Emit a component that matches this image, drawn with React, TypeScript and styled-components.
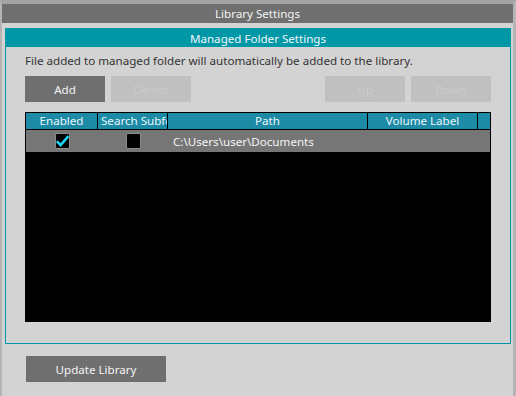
import React from "react";
import styled, { createGlobalStyle } from "styled-components";

const Global = createGlobalStyle`
  html, body { margin: 0; padding: 0; background: #d3d3d3; }
  body { font-family: "Noto Sans", "DejaVu Sans", sans-serif; font-size: 11.6px; }
`;

const Window = styled.div`
  width: 516px;
  height: 396px;
  box-sizing: border-box;
  background: #d3d3d3;
  border-left: 2px solid #b4b4b4;
  border-right: 3px solid #b4b4b4;
  border-top: 4px solid #a4a4a4;
  display: flex;
  flex-direction: column;
`;

const TitleBar = styled.div`
  height: 19px;
  background: #6f6f6f;
  color: #f4f4f4;
  display: flex;
  align-items: center;
  justify-content: center;
`;

const Panel = styled.div`
  margin: 5px 0 0 3px;
  width: 506px;
  height: 316px;
  box-sizing: border-box;
  border: 1px solid #0097a7;
  display: flex;
  flex-direction: column;
`;

const PanelHeader = styled.div`
  height: 18px;
  background: #0097a7;
  color: #f0f8fa;
  display: flex;
  align-items: center;
  justify-content: center;
`;

const Description = styled.div`
  color: #333;
  padding: 6px 0 0 19px;
  height: 24px;
  box-sizing: border-box;
`;

const ButtonRow = styled.div`
  display: flex;
  gap: 6px;
  padding: 0 0 0 19px;
  margin-top: 5px;
  width: 466px;
`;

const Spacer = styled.div`
  flex: 1;
`;

const Btn = styled.div<{ $disabled?: boolean; $w?: number }>`
  width: ${(p) => p.$w ?? 80}px;
  height: 26px;
  display: flex;
  align-items: center;
  justify-content: center;
  background: ${(p) => (p.$disabled ? "#c0c0c0" : "#6f6f6f")};
  color: ${(p) => (p.$disabled ? "#cbcbcb" : "#f4f4f4")};
`;

const Table = styled.div`
  margin: 10px 0 0 19px;
  width: 466px;
  height: 210px;
  background: #000;
  border: 1px solid #000;
  box-sizing: border-box;
  display: flex;
  flex-direction: column;
`;

const HeaderRow = styled.div`
  display: flex;
  height: 16px;
  background: #1e8ba6;
  border-bottom: 1px solid #000;
`;

const HeadCell = styled.div<{ $w: number; $last?: boolean; $clip?: boolean }>`
  width: ${(p) => p.$w}px;
  flex: none;
  box-sizing: border-box;
  border-right: ${(p) => (p.$last ? "none" : "1px solid #000")};
  color: #e8f6fa;
  display: flex;
  align-items: center;
  justify-content: ${(p) => (p.$clip ? "flex-start" : "center")};
  padding-left: ${(p) => (p.$clip ? 3 : 0)}px;
  overflow: hidden;
  white-space: nowrap;
  line-height: 16px;
`;

const DataRow = styled.div`
  display: flex;
  height: 22px;
  background: #767676;
  align-items: center;
`;

const Cell = styled.div<{ $w: number; $center?: boolean }>`
  width: ${(p) => p.$w}px;
  flex: none;
  display: flex;
  align-items: center;
  justify-content: ${(p) => (p.$center ? "center" : "flex-start")};
  padding-left: ${(p) => (p.$center ? 0 : 5)}px;
  box-sizing: border-box;
  color: #f4f4f4;
  white-space: nowrap;
`;

const Check = styled.div`
  width: 15px;
  height: 16px;
  box-sizing: border-box;
  background: #000;
  border: 1px solid #8a8a8a;
  border-radius: 2px;
  display: flex;
  align-items: center;
  justify-content: center;
`;

const Footer = styled.div`
  padding: 12px 0 0 24px;
`;

export default function App() {
  return (
    <>
      <Global />
      <Window>
        <TitleBar>Library Settings</TitleBar>
        <Panel>
          <PanelHeader>Managed Folder Settings</PanelHeader>
          <Description>File added to managed folder will automatically be added to the library.</Description>
          <ButtonRow>
            <Btn>Add</Btn>
            <Btn $disabled>Delete</Btn>
            <Spacer />
            <Btn $disabled>Up</Btn>
            <Btn $disabled>Down</Btn>
          </ButtonRow>
          <Table>
            <HeaderRow>
              <HeadCell $w={72}>Enabled</HeadCell>
              <HeadCell $w={70} $clip>Search Subfolders</HeadCell>
              <HeadCell $w={200}>Path</HeadCell>
              <HeadCell $w={110}>Volume Label</HeadCell>
              <HeadCell $w={12} $last />
            </HeaderRow>
            <DataRow>
              <Cell $w={72} $center>
                <Check>
                  <svg width="13" height="14" viewBox="0 0 13 14">
                    <path d="M0.8 7.2 L4.6 11 L12.4 2.2" fill="none" stroke="#1ad3ee" strokeWidth="2.6" />
                  </svg>
                </Check>
              </Cell>
              <Cell $w={70} $center>
                <Check />
              </Cell>
              <Cell $w={200}>C:\Users\user\Documents</Cell>
            </DataRow>
          </Table>
        </Panel>
        <Footer>
          <Btn $w={140}>Update Library</Btn>
        </Footer>
      </Window>
    </>
  );
}
